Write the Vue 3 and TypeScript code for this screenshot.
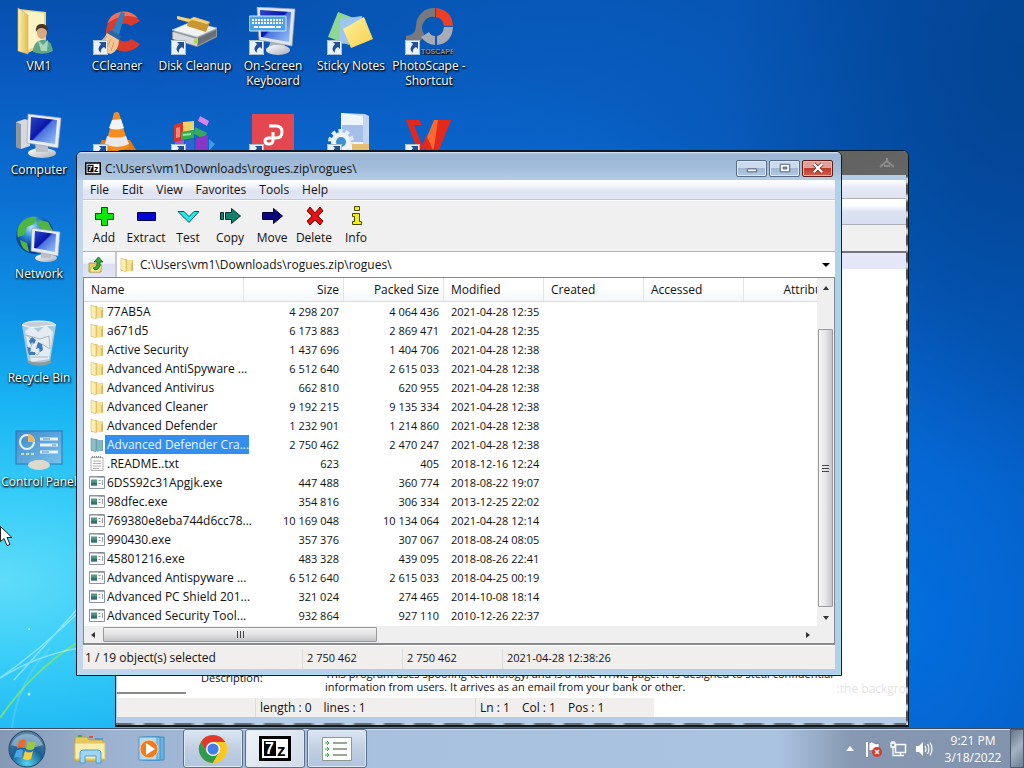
<script setup lang="ts">
import { ref } from 'vue'

interface DesktopIcon {
  id: string
  label: string
  shortcut: boolean
  captioned: boolean
}

interface FileRow {
  icon: 'folder' | 'text' | 'exe'
  name: string
  size: string
  packed: string
  modified: string
}

const entry = (id: string, label: string, shortcut = false, captioned = true): DesktopIcon => ({
  id,
  label,
  shortcut,
  captioned,
})

const desktopIcons: DesktopIcon[] = [
  entry('user', 'VM1'),
  entry('ccleaner', 'CCleaner', true),
  entry('disk', 'Disk Cleanup', true),
  entry('osk', 'On-Screen Keyboard', true),
  entry('sticky', 'Sticky Notes', true),
  entry('photoscape', 'PhotoScape - Shortcut', true),
  entry('computer', 'Computer'),
  entry('cone', 'Media player', true, false),
  entry('blocks', 'Defragmenter', true, false),
  entry('pdf', 'PDF editor', true, false),
  entry('gear', 'Setup', true, false),
  entry('wps', 'Office', true, false),
  entry('network', 'Network'),
  entry('recycle', 'Recycle Bin'),
  entry('control', 'Control Panel'),
]

const menus = ['File', 'Edit', 'View', 'Favorites', 'Tools', 'Help']
const tools = ['Add', 'Extract', 'Test', 'Copy', 'Move', 'Delete', 'Info']
const path = ref('C:\\Users\\vm1\\Downloads\\rogues.zip\\rogues\\')
const selected = ref(7)

const row = (
  icon: FileRow['icon'],
  name: string,
  size: string,
  packed: string,
  modified: string,
): FileRow => ({ icon, name, size, packed, modified })

const files: FileRow[] = [
  row('folder', '77AB5A', '4 298 207', '4 064 436', '2021-04-28 12:35'),
  row('folder', 'a671d5', '6 173 883', '2 869 471', '2021-04-28 12:35'),
  row('folder', 'Active Security', '1 437 696', '1 404 706', '2021-04-28 12:38'),
  row('folder', 'Advanced AntiSpyware ...', '6 512 640', '2 615 033', '2021-04-28 12:38'),
  row('folder', 'Advanced Antivirus', '662 810', '620 955', '2021-04-28 12:38'),
  row('folder', 'Advanced Cleaner', '9 192 215', '9 135 334', '2021-04-28 12:38'),
  row('folder', 'Advanced Defender', '1 232 901', '1 214 860', '2021-04-28 12:38'),
  row('folder', 'Advanced Defender Cra...', '2 750 462', '2 470 247', '2021-04-28 12:38'),
  row('text', '.README..txt', '623', '405', '2018-12-16 12:24'),
  row('exe', '6DSS92c31Apgjk.exe', '447 488', '360 774', '2018-08-22 19:07'),
  row('exe', '98dfec.exe', '354 816', '306 334', '2013-12-25 22:02'),
  row('exe', '769380e8eba744d6cc78...', '10 169 048', '10 134 064', '2021-04-28 12:14'),
  row('exe', '990430.exe', '357 376', '307 067', '2018-08-24 08:05'),
  row('exe', '45801216.exe', '483 328', '439 095', '2018-08-26 22:41'),
  row('exe', 'Advanced Antispyware ...', '6 512 640', '2 615 033', '2018-04-25 00:19'),
  row('exe', 'Advanced PC Shield 201...', '321 024', '274 465', '2014-10-08 18:14'),
  row('exe', 'Advanced Security Tool...', '932 864', '927 110', '2010-12-26 22:37'),
]
</script>

<template>
  <div class="screen">
    <!-- Shared symbols -->
    <svg class="defs" aria-hidden="true">
      <defs>
        <linearGradient id="gFolder" x1="0" x2="1"><stop offset="0" stop-color="#fbf0b0" /><stop offset="1" stop-color="#e0bd55" /></linearGradient>
        <linearGradient id="gScreen" x1="0" y1="0" x2="1" y2="1"><stop offset="0" stop-color="#2a48c8" /><stop offset=".45" stop-color="#0a16a8" /><stop offset=".5" stop-color="#4c74e0" /><stop offset="1" stop-color="#9cc4f6" /></linearGradient>
        <linearGradient id="gSilver" x1="0" x2="1" y2="1"><stop offset="0" stop-color="#ffffff" /><stop offset="1" stop-color="#a9afb8" /></linearGradient>
        <radialGradient id="gGlobe" cx=".4" cy=".3"><stop offset="0" stop-color="#b8e6ff" /><stop offset=".5" stop-color="#2c8fd8" /><stop offset="1" stop-color="#0a3f96" /></radialGradient>
        <radialGradient id="gOrb" cx=".5" cy=".9" r=".9"><stop offset="0" stop-color="#4fd6f0" /><stop offset=".5" stop-color="#1c5f94" /><stop offset="1" stop-color="#5c86a8" /></radialGradient>
        <linearGradient id="gYellow" x1="0" y1="0" x2="1" y2="1"><stop offset="0" stop-color="#fff3a0" /><stop offset="1" stop-color="#f6cf4a" /></linearGradient>
        <linearGradient id="gPanel" x1="0" y1="0" x2="1" y2="1"><stop offset="0" stop-color="#3d8bcb" /><stop offset="1" stop-color="#7cc0ea" /></linearGradient>
      </defs>

      <symbol id="user" viewBox="0 0 48 48">
        <path d="M4 2 31 5v32l-18 9z" fill="#ead287" />
        <path d="M9 4 29 6v31l-17 6z" fill="#fbf3c4" />
        <path d="M3 1 13 8v39L3 44z" fill="url(#gFolder)" stroke="#d9bb62" stroke-width=".6" />
        <path d="M18 45q0-10 8-12 10-2 12 11-9 5-20 1z" fill="#5fa784" />
        <path d="m23 33 5 5 5-5-1 11h-6z" fill="#a9d7bd" />
        <ellipse cx="27" cy="25" rx="5" ry="7" fill="#d9a981" />
        <path d="M21 25q-1-9 7-8 6 1 5 9-2-5-7-5-3 0-5 4z" fill="#4b3424" />
      </symbol>

      <symbol id="ccleaner" viewBox="0 0 48 48">
        <path d="M47 14A19 19 0 1 0 47 37l-9-5a9 9 0 1 1 0-13z" fill="#dc3a2c" />
        <path d="M45 11a18 18 0 0 0-31 6q14-12 31-6z" fill="#f0705c" />
        <path d="m28 5 4 1-6 22-7-4z" fill="#2f7fc4" />
        <path d="m17 23 11 6-2 5-12-7z" fill="#2468a8" />
        <path d="m14 26 12 7q0 10-8 14-10-2-17-10 9-2 13-11z" fill="#f3c898" />
        <path d="m14 29-7 9m11-6-5 11m8-8-3 9" stroke="#d99c64" />
      </symbol>

      <symbol id="disk" viewBox="0 0 48 48">
        <path d="m1 25 19-8 26 5v8L26 40 1 32z" fill="#8f959d" />
        <path d="m1 23 19-8 26 6-20 9z" fill="#f0f2f4" stroke="#bfc4ca" stroke-width=".6" />
        <path d="m2 25 24 7v7L2 32z" fill="#d7dade" />
        <path d="m27 31 18-8v6l-18 9z" fill="#696f77" />
        <path d="m23 32 4-1v5l-4 1z" fill="#b6d84c" />
        <path d="m6 9 13 3 4-2 16 5-4 10-19-6 1-4-11-3z" fill="#c99632" />
        <path d="m6 9 13 3 4-2 16 5-3 2-15-4-4 2-11-3z" fill="#f1d27b" />
      </symbol>

      <symbol id="osk" viewBox="0 0 48 48">
        <path d="M22 34h12l3 7H19z" fill="#aeb4bd" />
        <ellipse cx="29" cy="43" rx="12" ry="5" fill="url(#gSilver)" />
        <path d="m8 0 38 2-3 37-33-6z" fill="#dfe5ed" stroke="#9ba4b0" stroke-width=".7" />
        <path d="m11 3 31 2-2 30-28-5z" fill="url(#gScreen)" />
        <rect x="0" y="9" width="37" height="15" rx="1" fill="#4aa1e6" stroke="#d7efff" />
        <path d="M3 13h31M3 16h31" stroke="#fff" stroke-width="2" stroke-dasharray="2 1" />
        <path d="M5 20h4m1 0h16m1 0h5" stroke="#fff" stroke-width="2" />
      </symbol>

      <symbol id="sticky" viewBox="0 0 48 48">
        <path d="m11 5 21 8-10 25L1 30z" fill="#8fd693" />
        <path d="m13 12 22-3 4 26-27 2z" fill="#9cc5f0" />
        <path d="m16 22 21-12 9 22-22 9z" fill="url(#gYellow)" />
      </symbol>

      <symbol id="photoscape" viewBox="0 0 48 48">
        <path d="M30 1a18 18 0 0 0-19 18q0 9-10 10v9q16 0 18-11a11 11 0 0 1 11-17z" fill="#77797d" />
        <path d="M31 1q16 2 17 18h-9q-1-8-8-9z" fill="#ed3f25" />
        <path d="M48 20q-1 16-16 18v-9q6-1 7-9zM30 38q-9-1-14-8l8-5q2 4 6 4z" fill="#a6abb4" />
        <text x="16" y="47" font-family="Liberation Sans, sans-serif" font-size="7" font-weight="700" fill="#8d97a8">TOSCAPE</text>
      </symbol>

      <symbol id="computer" viewBox="0 0 48 48">
        <path d="m1 11 9-3 5 2v25L6 38l-5-2z" fill="#d5d9de" />
        <path d="m1 11 5 2v25l-5-2z" fill="#8d959e" />
        <ellipse cx="27" cy="42" rx="14" ry="5" fill="url(#gSilver)" />
        <path d="M20 32h13v9H21z" fill="#bbc1c8" />
        <path d="m13 3 33 4-3 30-31-5z" fill="#e8ecf0" stroke="#9ba4b0" stroke-width=".7" />
        <path d="m16 6 26 3-2 24-25-4z" fill="url(#gScreen)" />
      </symbol>

      <symbol id="cone" viewBox="0 0 48 48">
        <path d="M4 39 9 29h28l6 10v9H4z" fill="#e87812" />
        <path d="M21 2q3-2 5 0l10 34q-11 7-24 0z" fill="#f68b1e" />
        <path d="m19 9 9-1 3 9q-8 3-15 0z" fill="#f3f3f3" />
        <path d="m14 25q9 3 19 0l3 8q-12 6-24 0z" fill="#e9e9e9" />
      </symbol>

      <symbol id="blocks" viewBox="0 0 48 48">
        <path d="m3 14 9-3v18l-9 2z" fill="#d8342a" />
        <path d="m5 17 4-1v10l-4 1z" fill="#f08a7a" />
        <path d="m12 11 11-1v9l-11 2z" fill="#efd169" />
        <path d="m10 21 13-2v8l-13 2z" fill="#32ad4c" />
        <path d="m12 23 8-1v2l-8 1z" fill="#a0e6a8" />
        <path d="m24 16 12 6-3 6-10-5z" fill="#3aa957" />
        <path d="m29 5 9 5-2 5-9-5z" fill="#db83e4" />
        <path d="m25 27 12-3v18H24z" fill="#8a35c6" />
        <path d="m4 31 9-2v12H3z" fill="#b94fd0" />
        <path d="m14 30 9-2v12h-9z" fill="#2d65d4" />
        <path d="m38 28 6 5-6 7z" fill="#3d9ae5" />
      </symbol>

      <symbol id="pdf" viewBox="0 0 48 48">
        <rect x="3" y="3" width="42" height="44" rx="1" fill="#e4484e" />
        <path d="M20 15h7q6 0 6 6t-6 6h-7q-4 0-4 3t4 3q4 0 4-4v-8" fill="none" stroke="#fff" stroke-width="3" />
      </symbol>

      <symbol id="gear" viewBox="0 0 48 48">
        <path d="m14 2 24 1 4 2v43H14z" fill="#c3d4ee" />
        <path d="m14 2 22 3v43H14z" fill="#eef4fc" />
        <path d="M15 14h21v17H15z" fill="#a6bfe8" />
        <circle cx="14" cy="31" r="10" fill="#eef4f8" />
        <circle cx="14" cy="31" r="11" fill="none" stroke="#e4edf4" stroke-width="4" stroke-dasharray="4 3" />
        <circle cx="14" cy="31" r="5" fill="#3d8fd0" />
        <path d="M25 33h17v8H25z" fill="#e5c070" />
      </symbol>

      <symbol id="wps" viewBox="0 0 48 48">
        <path d="M1 9h13l3 5H9l8 20 6-12 5 12 10-20-7-5h15L32 43h-9l-3-7-3 7h-3z" fill="#e5281c" />
        <path d="M29 9h11l-6 12-6 18-6-13z" fill="#f8682f" />
        <path d="m33 9 13 0-14 34-3-6z" fill="#e5281c" />
      </symbol>

      <symbol id="network" viewBox="0 0 48 48">
        <circle cx="20" cy="20" r="19" fill="url(#gGlobe)" />
        <path d="M5 9q8-9 17-7l-3 7-7 3-3 8-6 2q-2-7 2-13zM24 5l9 2 5 9-10-1-6-5zM5 25l7 3 2 9q-8-3-9-12z" fill="#4eb53e" />
        <ellipse cx="31" cy="43" rx="11" ry="4" fill="url(#gSilver)" />
        <path d="M26 34h10v9H26z" fill="#bbc1c8" />
        <path d="m17 13 28 4-2 24-27-5z" fill="#e8ecf0" stroke="#9ba4b0" stroke-width=".7" />
        <path d="m20 16 21 3-1 18-21-4z" fill="url(#gScreen)" />
      </symbol>

      <symbol id="recycle" viewBox="0 0 48 48">
        <path d="M7 6h34l-6 37q-11 5-22 0z" fill="#c3d2dc" opacity=".85" />
        <path d="m10 12 7-5 6 6 8-7 7 7-4 27-18 3z" fill="#eef2f5" opacity=".85" />
        <path d="m11 16 8 6-5 9 9 5 4-11 8 5-1-13-9 3zM14 38h19" fill="none" stroke="#a9b6c0" />
        <path d="M7 6q8 4 17 2t17-2q-4-4-17-4T7 6z" fill="#c6cfd6" stroke="#f5f8fa" />
        <path d="m14 22 3-4 4 3-2 4-2-2-1 3zm9 1 4 2 1 6-3 2-1-4-3 1zm-11 5 4 1-1 4h5v3h-6z" fill="#3c78c4" />
        <path d="M12 41q12 5 24 0v3q-12 6-23 0z" fill="#8f9c9c" />
      </symbol>

      <symbol id="control" viewBox="0 -4 48 48">
        <rect x="1" y="4" width="46" height="33" fill="url(#gPanel)" stroke="#2f75b4" />
        <circle cx="12" cy="15" r="7" fill="none" stroke="#e7f3fc" stroke-width="2" />
        <path d="M13 15V7a8 8 0 0 1 7 8z" fill="#f0b65d" />
        <path d="M6 27h3m2 0h3m2 0h3" stroke="#c6e2a8" stroke-width="2" />
        <path d="M25 12h18M25 18h18M25 25h18" stroke="#e7f3fc" stroke-width="3" />
        <path d="M28 12h7m2 6h4m-14 7h7" stroke="#3d8bcb" />
        <path d="M20 33h9l1 5H19z" fill="#d4d4cb" />
        <ellipse cx="24" cy="38" rx="11" ry="5" fill="#ddd9cc" />
      </symbol>

      <symbol id="folder" viewBox="0 0 16 16">
        <path d="M2 2h6l1 1h5v11H2z" fill="#e5c767" />
        <path d="M8 3h5v10l-5 2z" fill="#f4e09a" />
        <path d="m2 1 5 2v12l-5-2z" fill="#fbeeb2" stroke="#d8b95c" stroke-width=".6" />
        <path d="M13 6v7" stroke="#c9a544" />
      </symbol>
      <symbol id="folderSel" viewBox="0 0 16 16">
        <path d="M2 2h6l1 1h5v11H2z" fill="#6ea6b4" />
        <path d="M8 3h5v10l-5 2z" fill="#84b8c2" />
        <path d="m2 1 5 2v12l-5-2z" fill="#8fbfc4" stroke="#5f9cb0" stroke-width=".6" />
      </symbol>
      <symbol id="text" viewBox="0 0 16 16">
        <path d="M2 1.500h12v13H2z" fill="#fbfbfb" stroke="#a0a0a0" stroke-width=".8" />
        <path d="M4 5h8M4 7.500h8M4 10h8M4 12.500h6" stroke="#b4b4b4" />
        <path d="M3 1h10" stroke="#8a8a8a" stroke-width="2" stroke-dasharray="1 1" />
      </symbol>
      <symbol id="exe" viewBox="0 0 16 16">
        <path d="M.5 1.500h15v12H.5z" fill="#fbfbfd" stroke="#8e959e" />
        <path d="M1 2.500h14" stroke="#c4c9d0" />
        <path d="M10 1v2m2-2v2m2-2v2" stroke="#7a828c" stroke-width=".8" />
        <path d="M2 4.500h6v6H2z" fill="#4f9a80" />
        <path d="M2 7.500h6v3H2z" fill="#356f72" />
        <path d="M9.500 5.500h2m-2 3h2M13.500 5v5" stroke="#98a0a8" />
      </symbol>

      <symbol id="Add" viewBox="0 0 22 22">
        <path d="M8.500 2.500h6v6h6v6h-6v6h-6v-6h-6v-6h6z" fill="#0ce80c" stroke="#0a4a0a" />
      </symbol>
      <symbol id="Extract" viewBox="0 0 22 22">
        <path d="M2.500 7.500h18v8h-18z" fill="#0404d8" stroke="#02024c" />
      </symbol>
      <symbol id="Test" viewBox="0 0 22 22">
        <path d="M1 6.500h6l5 5 5-5h5l-10 11z" fill="#22eaea" stroke="#0a5560" />
      </symbol>
      <symbol id="Copy" viewBox="0 0 22 22">
        <path d="M1.500 7.500h3v7h-3zM6.500 7.500h6v-4l9 7.500-9 7.500v-4h-6z" fill="#10806e" stroke="#05342e" />
      </symbol>
      <symbol id="Move" viewBox="0 0 22 22">
        <path d="M1.500 7.500h11v-4l9 7.500-9 7.500v-4h-11z" fill="#08087c" stroke="#020230" />
      </symbol>
      <symbol id="Delete" viewBox="0 0 22 22">
        <path d="m4 6 3-4 5 6 5-6 3 4-5 5 5 5-3 4-5-5-5 5-3-4 5-5z" fill="#e61010" stroke="#6a0808" />
      </symbol>
      <symbol id="Info" viewBox="0 0 22 22">
        <path d="M9.500 1.500h5v4h-5zM7.500 8.500h7v8h2v3h-9v-3h2v-5h-2z" fill="#f6ee10" stroke="#4a4604" />
      </symbol>

      <symbol id="sevenzip" viewBox="0 0 32 25">
        <path d="M1.500 1.500h29v22h-29z" fill="#fff" stroke="#000" stroke-width="3" />
        <path d="M5 5h12v15H5z" fill="#000" />
        <text x="6" y="18" font-family="Liberation Sans, sans-serif" font-size="16" font-weight="700" fill="#fff">7</text>
        <text x="18" y="20" font-family="Liberation Sans, sans-serif" font-size="17" font-weight="700" fill="#000">z</text>
      </symbol>
    </svg>

    <main class="desktop">
      <svg class="wallpaper" viewBox="0 0 120 260" aria-hidden="true">
        <path d="M0 250Q32 203 78 174" fill="none" stroke="#7fe46c" stroke-width="2" opacity=".85" />
        <path d="M0 210Q40 186 80 180M0 210Q40 182 80 143M14 212 80 138" fill="none" stroke="#d4f8ff" stroke-width="1.500" opacity=".5" />
        <path d="M12 260Q17 215 50 180" fill="none" stroke="#7fe4fc" stroke-width="2" opacity=".3" />
        <circle cx="29" cy="226" r="1.500" fill="#d9fbff" opacity=".8" />
        <circle cx="29" cy="161" r="1" fill="#d9fbff" opacity=".8" />
      </svg>

      <nav class="icons" aria-label="Desktop">
        <button v-for="item in desktopIcons" :key="item.id" class="tile" :class="item.id" :aria-label="item.label">
          <span class="art">
            <svg class="big"><use :href="'#' + item.id" /></svg>
            <svg v-if="item.shortcut" class="arrow" viewBox="0 0 15 15">
              <path d="M0 0h15v15H0z" fill="#e9f1fa" />
              <path d="M.5.500h14v14H.5z" fill="none" stroke="#a9bcd0" />
              <path d="M6 2h7v7l-2-2q-4 2-3 6Q3 9 8 4z" fill="#234f94" />
            </svg>
          </span>
          <span v-if="item.captioned" class="caption">{{ item.label }}</span>
        </button>
      </nav>

      <!-- Window in the back -->
      <section class="window back" aria-label="Details">
        <div class="back-title">
          <svg width="16" height="12" viewBox="0 0 16 12"><path d="M8 1v4M1 10l7-6 7 6M5 9h6" fill="none" stroke="#8d8d8d" stroke-width="2" /></svg>
        </div>
        <div class="back-page">
          <div class="menu-strip"></div>
          <div class="tab-strip"></div>
          <div class="tool-strip"></div>
          <div class="head-strip"></div>
          <div class="back-body">
            <div class="pane-end"></div>
            <dl class="details">
              <dt>Description:</dt>
              <dd>This program uses spoofing technology, and is a fake HTML page. It is designed to steal confidential<br />information from users. It arrives as an email from your bank or other.</dd>
            </dl>
            <span class="ghost">:the backgro</span>
          </div>
          <div class="back-status">
            <span class="blank"></span>
            <span class="counts"><span>length : 0</span><span>lines : 1</span></span>
            <span class="position"><span>Ln : 1</span><span>Col : 1</span><span>Pos : 1</span></span>
          </div>
        </div>
      </section>

      <!-- File manager -->
      <section class="window front" aria-label="File manager">
        <header class="titlebar">
          <svg class="logo"><use href="#sevenzip" /></svg>
          <h1>{{ path }}</h1>
          <div class="controls">
            <button aria-label="Minimize"><svg viewBox="0 0 30 16"><path d="M10.500 8.500h10v3h-10z" fill="#fff" stroke="#4a5a70" /></svg></button>
            <button aria-label="Maximize"><svg viewBox="0 0 30 16"><path d="M10.500 3.500h10v8h-10z" fill="#fff" stroke="#4a5a70" /><path d="M13.500 6.500h4v2h-4z" fill="#9fb4d2" stroke="#4a5a70" /></svg></button>
            <button class="close" aria-label="Close"><svg viewBox="0 0 30 16"><path d="m11 3 9 9m0-9-9 9" stroke="#5a2a28" stroke-width="4" /><path d="m11 3 9 9m0-9-9 9" stroke="#fff" stroke-width="2.500" /></svg></button>
          </div>
        </header>

        <div class="client">
          <nav class="menu" aria-label="Menu">
            <button v-for="m in menus" :key="m">{{ m }}</button>
          </nav>
          <div class="toolbar">
            <button v-for="t in tools" :key="t">
              <svg><use :href="'#' + t" /></svg>
              <span>{{ t }}</span>
            </button>
          </div>
          <div class="address">
            <button class="up" aria-label="Up one level">
              <svg viewBox="0 0 18 18">
                <path d="M2 7h5l1 1h6v8H2z" fill="#e8cd5c" stroke="#a98f2c" stroke-width=".8" />
                <path d="m3 16 2-6h10l-2 6z" fill="#faf09c" stroke="#b79d3a" stroke-width=".6" />
                <path d="M6 12q5-1 4-6H7l4.500-5L16 6h-3q1 7-5 8z" fill="#2fae2f" stroke="#0f5a14" stroke-width=".8" />
              </svg>
            </button>
            <div class="combo">
              <svg class="small"><use href="#folder" /></svg>
              <input v-model="path" aria-label="Path" />
              <button aria-label="Recent paths"><svg viewBox="0 0 8 4"><path d="M0 0h8L4 4z" /></svg></button>
            </div>
          </div>

          <div class="list">
            <div class="viewport">
              <table>
                <colgroup>
                  <col class="c-name" /><col v-for="n in 6" :key="n" class="c-data" />
                </colgroup>
                <thead>
                  <tr>
                    <th>Name</th>
                    <th class="num">Size</th>
                    <th class="num">Packed Size</th>
                    <th>Modified</th>
                    <th>Created</th>
                    <th>Accessed</th>
                    <th class="num">Attributes</th>
                  </tr>
                </thead>
                <tbody>
                  <tr v-for="(f, i) in files" :key="f.name" :class="{ selected: i === selected }" @click="selected = i">
                    <td>
                      <span class="name">
                        <svg class="small"><use :href="i === selected ? '#folderSel' : '#' + f.icon" /></svg>
                        <span class="label">{{ f.name }}</span>
                      </span>
                    </td>
                    <td class="num">{{ f.size }}</td>
                    <td class="num">{{ f.packed }}</td>
                    <td class="date">{{ f.modified }}</td>
                    <td></td>
                    <td></td>
                    <td></td>
                  </tr>
                </tbody>
              </table>
            </div>
            <div class="vbar">
              <svg class="tip" viewBox="0 0 8 4"><path d="M1 4h6L4 0z" fill="#333" /></svg>
              <div class="vtrack"><div class="vthumb"><i></i><i></i><i></i></div></div>
              <svg class="tip" viewBox="0 0 8 4"><path d="M1 0h6L4 4z" fill="#333" /></svg>
            </div>
            <div class="hbar">
              <svg class="side" viewBox="0 0 4 8"><path d="M4 1v6L0 4z" fill="#333" /></svg>
              <div class="htrack"><div class="hthumb"><i></i><i></i><i></i></div></div>
              <svg class="side" viewBox="0 0 4 8"><path d="M0 1v6l4-3z" fill="#333" /></svg>
            </div>
          </div>

          <footer class="status">
            <span class="wide">1 / 19 object(s) selected</span>
            <span class="digits">2 750 462</span>
            <span class="digits">2 750 462</span>
            <span class="digits rest">2021-04-28 12:38:26</span>
          </footer>
        </div>
      </section>

      <svg class="cursor" viewBox="0 0 14 20" aria-hidden="true">
        <path d="M.5.500v15l3.500-3 3 7 3-1-3-7h5z" fill="#fff" stroke="#222" />
      </svg>
    </main>

    <footer class="taskbar">
      <button class="start" aria-label="Start">
        <svg viewBox="0 0 38 38">
          <circle cx="19" cy="19" r="18" fill="url(#gOrb)" stroke="#24465f" />
          <path d="M3 15a17 17 0 0 1 32 0q-16 6-32 0z" fill="#d9e8f2" opacity=".45" />
          <path d="M11 11q4-3 7-1l-2 8q-4-2-7 1z" fill="#ee6a2c" />
          <path d="M20 11q4 3 8 0l-2 8q-4 2-8 0z" fill="#9ccb3a" />
          <path d="M8 21q4-3 7-1l-2 8q-4-2-7 0z" fill="#4aa8e8" />
          <path d="M17 21q4 3 8 0l-2 8q-4 2-8 0z" fill="#fbcf3c" />
        </svg>
      </button>
      <button class="pin" aria-label="File Explorer">
        <svg viewBox="0 0 34 32">
          <path d="M2 4h12l2 3h14v21H2z" fill="#e6c960" stroke="#c2a23c" />
          <path d="M5 3h4" stroke="#49a63c" stroke-width="2" /><path d="M16 4h4" stroke="#d6573b" stroke-width="2" /><path d="M22 6h8" stroke="#4a9fd8" stroke-width="2" />
          <path d="M2 10h30v16H2z" fill="#faeeae" stroke="#dcc264" />
          <path d="M7 30V20q0-3 3-3h15q3 0 3 3v10h-5v-7H12v7z" fill="#9fd4f4" stroke="#4e9ccf" />
        </svg>
      </button>
      <button class="pin" aria-label="Media Player">
        <svg viewBox="0 0 34 32">
          <path d="M11 4h18v23H11z" fill="#6ab2e4" stroke="#3e8cc4" />
          <path d="M7 4h18v23H7z" fill="#8fc8ee" stroke="#3e8cc4" />
          <path d="M4 4h18v23H4z" fill="#b4dcf6" stroke="#4a98cc" />
          <circle cx="14" cy="16" r="9" fill="#f07c1c" stroke="#fbd0a0" />
          <path d="m11 10 9 6-9 6z" fill="#fff" />
        </svg>
      </button>
      <button class="task" aria-label="Chrome">
        <svg viewBox="0 0 32 32">
          <circle cx="16" cy="16" r="15" fill="#f9c823" />
          <path d="M3 8.500A15 15 0 0 1 29 8.500H16L9.500 20z" fill="#e03a2e" />
          <path d="M3 8.500A15 15 0 0 0 16 31l6.500-11.500h-13z" fill="#2e9c4c" />
          <path d="M29 8.500A15 15 0 0 1 16 31l6.500-11.500L16 8.500z" fill="#f9c823" />
          <circle cx="16" cy="16" r="7.500" fill="#fff" /><circle cx="16" cy="16" r="6" fill="#3f7fea" />
        </svg>
      </button>
      <button class="task active" aria-label="7-Zip"><svg><use href="#sevenzip" /></svg></button>
      <button class="task" aria-label="Notes">
        <svg viewBox="0 0 32 26">
          <path d="M1.500 1.500h29v23h-29z" fill="#fcfefc" stroke="#8a9a8e" />
          <path d="M12 7h14M12 13h14M12 19h14" stroke="#7c867e" stroke-width="1.500" />
          <path d="M4 7h4m-2-2 2 2-2 2M4 13h4m-2-2 2 2-2 2M4 19h4m-2-2 2 2-2 2" fill="none" stroke="#35a045" />
        </svg>
      </button>
      <div class="tray">
        <button class="more" aria-label="Show hidden icons"><svg width="8" height="5" viewBox="0 0 8 5"><path d="M0 5h8L4 0z" fill="#fff" /></svg></button>
        <button aria-label="Action Center">
          <svg width="18" height="18" viewBox="0 0 18 18">
            <path d="M2 2v15" stroke="#fff" stroke-width="2" /><path d="M4 3q3-2 5 0t5 0v8q-3 1-5 0t-5 0z" fill="#fff" stroke="#5c6a7c" stroke-width=".6" />
            <circle cx="12" cy="12" r="5" fill="#d83a2c" /><path d="m10 10 4 4m0-4-4 4" stroke="#fff" stroke-width="1.500" />
          </svg>
        </button>
        <button aria-label="Network status">
          <svg width="18" height="18" viewBox="0 0 18 18">
            <path d="M5.500 4.500h10v8h-10zM7 15.500h7M10.500 13v2" fill="none" stroke="#fff" stroke-width="1.500" />
            <path d="M3 7v8.500h4M1 3h4v4H1zM2 1v2m2-2v2" fill="none" stroke="#fff" stroke-width="1.300" />
          </svg>
        </button>
        <button aria-label="Volume">
          <svg width="18" height="18" viewBox="0 0 18 18">
            <path d="M1 6h3l4-4v14l-4-4H1z" fill="#fff" />
            <path d="M10 6q2 3 0 6M12.500 4q3 5 0 10M15 2.500q4 6.500 0 13" fill="none" stroke="#fff" stroke-width="1.200" />
          </svg>
        </button>
        <div class="clock"><time>9:21 PM</time><time>3/18/2022</time></div>
        <button class="peek" aria-label="Show desktop"></button>
      </div>
    </footer>
  </div>
</template>

<style>
body {
  overflow: hidden;
}
</style>

<style scoped>
.screen {
  display: flex;
  flex-direction: column;
  height: 100vh;
  font-family: 'Open Sans', 'Noto Sans', sans-serif;
  font-size: 12px;
  line-height: 15px;
  color: #111;
}
.screen * {
  box-sizing: border-box;
}
.defs {
  position: absolute;
  width: 0;
  height: 0;
}
button,
input {
  margin: 0;
  padding: 0;
  border: 0;
  background: none;
  font: inherit;
  color: inherit;
}
svg {
  display: block;
}

/* Desktop */
.desktop {
  position: relative;
  flex: 1;
  min-height: 0;
  overflow: hidden;
  background:
    radial-gradient(ellipse 300px 420px at 100% 60px, rgba(0, 66, 140, 0.8), rgba(0, 70, 150, 0) 100%),
    radial-gradient(ellipse 420px 480px at 900px 620px, rgba(0, 116, 230, 0.75), rgba(0, 105, 215, 0) 100%),
    radial-gradient(ellipse 420px 300px at 560px 160px, rgba(10, 108, 210, 0.6), rgba(8, 98, 200, 0) 100%),
    radial-gradient(ellipse 1100px 580px at 0 580px, #5fdcf9 0, #38cdf8 14%, #19b4f3 30%, #0f93e6 46%, #0b6fd2 66%, #0957bd 90%, #0650ae 100%),
    #0650ae;
}
.wallpaper {
  position: absolute;
  left: 0;
  bottom: 0;
  width: 120px;
  height: 260px;
}
.icons {
  display: grid;
  grid-template-columns: repeat(6, 78px);
  grid-auto-rows: 104px;
  justify-content: start;
}
.tile {
  display: flex;
  flex-direction: column;
  align-items: center;
  padding-top: 7px;
  color: #fff;
  text-shadow: 0 1px 2px #000, 1px 1px 2px #000;
}
.tile.recycle,
.tile.control {
  grid-column: 1;
}
.art {
  position: relative;
  width: 48px;
  height: 48px;
}
.big {
  width: 48px;
  height: 48px;
}
.arrow {
  position: absolute;
  left: 0;
  bottom: 0;
  width: 15px;
  height: 15px;
}
.caption {
  margin-top: 3px;
  text-align: center;
}

/* Windows */
.window {
  position: absolute;
  display: flex;
  flex-direction: column;
  border: 1px solid #0c1a26;
  border-radius: 6px 6px 0 0;
  overflow: hidden;
}
.back {
  left: 115px;
  right: 115px;
  top: 150px;
  bottom: 1px;
  padding: 0 2px 8px 1px;
  background:
    repeating-linear-gradient(#4c4c4c 0 8px, #d2d2d2 11px 14px, #5c5c5c 17px) right / 2px 100% no-repeat,
    repeating-linear-gradient(90deg, #6a6a6a 0 14px, #c4ccd4 20px 26px, #6a6a6a 30px) bottom / 100% 2px no-repeat,
    #b4cde8;
  border-bottom-width: 2px;
}
.back-title {
  display: flex;
  justify-content: flex-end;
  height: 24px;
  margin: 0 -2px 5px -1px;
  padding: 6px 13px;
  background: linear-gradient(160deg, #565656, #6a6a68 40%, #5a5a58 60%, #666);
}
.back-page {
  flex: 1;
  display: flex;
  flex-direction: column;
  min-height: 0;
  background: #fff;
}
.menu-strip {
  height: 19px;
  background: linear-gradient(#fff, #e6e9f6 45%, #dfe2f2);
  border-bottom: 1px solid #aeb0b8;
}
.tab-strip {
  height: 26px;
  background: linear-gradient(#fff 25%, #dde3f3 50%, #d8def0);
  border-bottom: 1px solid #aeb0b8;
}
.tool-strip {
  height: 28px;
  background: #f0f0f0;
  border-bottom: 2px solid #74747c;
}
.head-strip {
  height: 16px;
  background: #e6e6fa;
}
.back-body {
  position: relative;
  flex: 1;
  display: flex;
  flex-direction: column;
  justify-content: flex-end;
}
.pane-end {
  position: absolute;
  left: 0;
  bottom: 4px;
  width: 69px;
  border-bottom: 2px solid #8a8c88;
}
.details {
  display: flex;
  margin: 0 0 5px 84px;
  font-size: 11px;
  line-height: 13px;
  white-space: nowrap;
}
.details dt {
  width: 124px;
  padding-top: 4px;
}
.details dd {
  margin: 0;
}
.ghost {
  position: absolute;
  right: 0;
  bottom: 2px;
  color: #e4e4e4;
}
.back-status {
  display: flex;
  height: 19px;
  line-height: 20px;
}
.back-status > span {
  display: flex;
  gap: 12px;
  padding-left: 4px;
  background: #f1eeee;
  border-right: 1px solid #dcdcdc;
}
.back-status .blank {
  width: 139px;
}
.back-status .counts {
  width: 220px;
}
.back-status .position {
  width: 178px;
  border: 0;
}

.front {
  left: 76px;
  right: 182px;
  top: 151px;
  padding: 0 6px 6px;
  background: linear-gradient(90deg, #c3d6ee, #b3cbe6 50%, #b4cfea);
  box-shadow: inset 0 0 0 1px #a7e1f4;
}
.titlebar {
  display: flex;
  align-items: center;
  height: 28px;
  margin: 0 -6px;
  padding: 5px 8px 0;
  background: linear-gradient(#e6eff8 0, #9ab6d4 2px, #a3bddb 60%, #b6cce6);
}
.logo {
  width: 16px;
  height: 13px;
}
.titlebar h1 {
  flex: 1;
  margin: 0 0 0 4px;
  font-size: 12px;
  font-weight: 400;
}
.controls {
  display: flex;
  gap: 2px;
}
.controls button {
  width: 31px;
  height: 17px;
  border: 1px solid #5a6d88;
  border-radius: 2px;
  background: linear-gradient(#cbdaec 45%, #a0b8d6 50%, #b4c9e2);
  box-shadow: inset 0 0 0 1px #dbe7f4;
}
.controls svg {
  width: 29px;
  height: 15px;
}
.controls .close {
  border-color: #5d1f1c;
  background: linear-gradient(#e2a196 45%, #c0392a 50%, #d3624c);
  box-shadow: inset 0 0 0 1px #eab4a8;
}
.client {
  display: flex;
  flex-direction: column;
  background: #f0f0f0;
}
.menu {
  display: flex;
  height: 20px;
  background: linear-gradient(#fff, #f3f5fb 30%, #dfe3f2 60%, #e3e7f4);
  border-bottom: 1px solid #c4c8d4;
}
.menu button {
  padding: 0 7px;
}
.menu button + button {
  padding: 0 7px 0 6px;
}
.toolbar {
  display: flex;
  height: 52px;
  border-top: 1px solid #fff;
  border-bottom: 1px solid #b4b4b4;
}
.toolbar button {
  display: flex;
  flex-direction: column;
  align-items: center;
  width: 42px;
  padding-top: 4px;
  gap: 3px;
}
.toolbar svg {
  width: 22px;
  height: 22px;
}
.address {
  display: flex;
  height: 25px;
}
.address .up {
  width: 32px;
  padding: 0 4px;
  background: linear-gradient(#fafbfe, #f0f2fa 45%, #dadff0 50%, #e2e6f4);
}
.up svg {
  width: 18px;
  height: 18px;
}
.combo {
  flex: 1;
  display: flex;
  align-items: center;
  padding: 0 5px 0 2px;
  border-left: 2px solid #c8c8cc;
  background: #fff;
}
.combo input {
  flex: 1;
  min-width: 0;
  padding-left: 5px;
  outline: 0;
}
.combo button svg {
  width: 8px;
  height: 4px;
}
.small {
  flex: none;
  width: 16px;
  height: 16px;
}

/* File list */
.list {
  display: grid;
  grid-template-columns: minmax(0, 1fr) 17px;
  border: 1px solid #828790;
  border-bottom: 2px solid #888b8e;
  background: #fff;
}
.viewport {
  overflow: hidden;
  padding-bottom: 1px;
}
table {
  width: 760px;
  table-layout: fixed;
  border-spacing: 0;
}
.c-name {
  width: 160px;
}
.c-data {
  width: 100px;
}
th {
  height: 24px;
  padding: 0 6px 0 7px;
  font-weight: 400;
  text-align: left;
  background: linear-gradient(#fff 40%, #f4f6f9);
  border-right: 1px solid #e2e6ea;
  border-bottom: 1px solid #d8dbe0;
}
td {
  height: 19px;
  padding: 0;
  white-space: nowrap;
}
th.num,
td.num {
  text-align: right;
}
th.num {
  padding-right: 4px;
}
td.num {
  padding-right: 5px;
  font-size: 11px;
}
td.date {
  padding-left: 7px;
  font-size: 11px;
}
.name {
  display: flex;
  align-items: center;
  padding-left: 5px;
}
.label {
  flex: 1;
  padding-left: 2px;
  line-height: 19px;
}
.selected .label {
  color: #e8f4ff;
  background: #338fee;
}
.vbar {
  display: flex;
  flex-direction: column;
  align-items: center;
  padding: 8px 0 6px;
  background: #efefef;
}
.tip {
  width: 8px;
  height: 4px;
}
.vtrack {
  flex: 1;
  width: 15px;
  padding: 39px 0 9px;
}
.vthumb {
  display: flex;
  flex-direction: column;
  align-items: center;
  justify-content: center;
  gap: 2px;
  height: 100%;
  border: 1px solid #999;
  border-radius: 1px;
  background: linear-gradient(90deg, #f6f6f6, #e6e6e8 50%, #c4c5c8);
}
.vthumb i {
  width: 7px;
  height: 1px;
  background: #444;
}
.hbar {
  grid-column: 1 / -1;
  display: flex;
  align-items: center;
  height: 17px;
  padding: 0 24px 0 7px;
  background: #efefef;
}
.side {
  width: 4px;
  height: 8px;
}
.htrack {
  flex: 1;
  padding-left: 8px;
}
.hthumb {
  display: flex;
  align-items: center;
  justify-content: center;
  gap: 2px;
  width: 39%;
  height: 15px;
  border: 1px solid #999;
  border-radius: 1px;
  background: linear-gradient(#f4f4f4, #e2e2e4 50%, #c2c3c6);
}
.hthumb i {
  width: 1px;
  height: 7px;
  background: #444;
}
.status {
  display: flex;
  height: 24px;
  padding-top: 3px;
  background: #f1eeee;
  border-top: 1px solid #fff;
  line-height: 18px;
}
.status span {
  width: 100px;
  padding-left: 4px;
  border-right: 1px solid #dcdcdc;
}
.status .wide {
  width: 220px;
  padding-left: 2px;
}
.status .digits {
  font-size: 11px;
}
.status .rest {
  flex: 1;
  border: 0;
}
.cursor {
  position: absolute;
  left: 0;
  top: 526px;
  width: 14px;
  height: 20px;
}

/* Taskbar */
.taskbar {
  display: flex;
  align-items: stretch;
  height: 40px;
  border-top: 1px solid #3c4c60;
  box-shadow: inset 0 1px #d2deec;
  background: linear-gradient(90deg, #8498b4 0, #9cb2d0 110px, #a8c1df 380px, #aac3e1 76%, #8799b2 83%, #8193ad 100%);
}
.start {
  width: 59px;
  padding-left: 8px;
}
.start svg {
  width: 38px;
  height: 38px;
}
.pin {
  width: 62px;
}
.pin svg {
  width: 34px;
  height: 32px;
  margin: 0 auto;
}
.task {
  width: 60px;
  margin-right: 2px;
  border: 1px solid #5c6f8c;
  border-radius: 3px;
  background: linear-gradient(#dbe6f2, #c0cfe2 50%, #b0c4de);
  box-shadow: inset 0 0 0 1px #dfe9f4;
}
.task.active {
  background: linear-gradient(135deg, #f0f4f9, #cfdaea);
}
.task svg {
  width: 32px;
  height: 30px;
  margin: 0 auto;
}
.task.active svg {
  height: 25px;
}
.tray {
  display: flex;
  align-items: center;
  gap: 7px;
  margin-left: auto;
  color: #fff;
}
.more {
  margin-right: 4px;
}
.clock {
  display: flex;
  flex-direction: column;
  align-items: center;
  width: 60px;
  margin-left: 3px;
  line-height: 17px;
}
.peek {
  align-self: stretch;
  width: 14px;
  border: 1px solid #4c5a6c;
  background: linear-gradient(135deg, #64758a, #a4b2c4 50%, #6c7d92);
}
</style>
